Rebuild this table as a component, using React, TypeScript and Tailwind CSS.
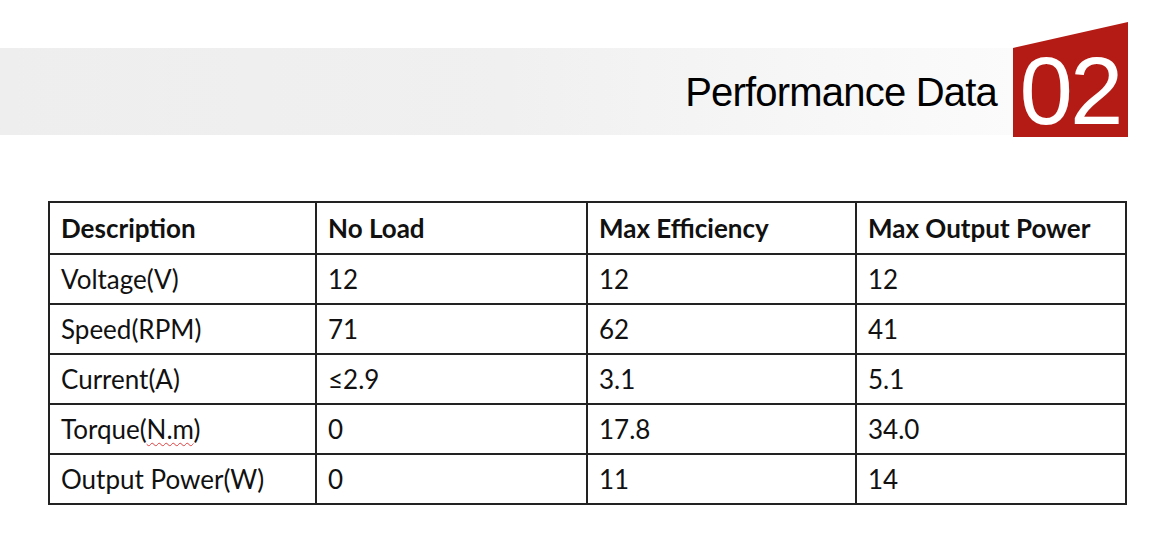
const columns = ['Description', 'No Load', 'Max Efficiency', 'Max Output Power'];

const rows: { label: React.ReactNode; values: string[] }[] = [
  { label: 'Voltage(V)', values: ['12', '12', '12'] },
  { label: 'Speed(RPM)', values: ['71', '62', '41'] },
  { label: 'Current(A)', values: ['≤2.9', '3.1', '5.1'] },
  {
    label: (
      <>
        Torque(
        <span className="underline decoration-wavy decoration-[#e04040] decoration-1 underline-offset-[3px]">N.m</span>)
      </>
    ),
    values: ['0', '17.8', '34.0'],
  },
  { label: 'Output Power(W)', values: ['0', '11', '14'] },
];

const colWidths = ['w-[267px]', 'w-[271px]', 'w-[269px]', 'w-[270px]'];

export default function App() {
  return (
    <div className="w-[1170px] h-[539px] bg-white overflow-hidden">
      {/* Section header */}
      <div className="flex items-end pt-[22px]">
        <div className="flex-1 h-[87px] mb-[2px] flex items-center justify-end pr-[16px] bg-gradient-to-r from-[#eeeeee] via-[#f0f0f0] to-[#fbfbfb]">
          <h1 className="font-['Liberation_Sans',Arial,sans-serif] text-[40px] leading-none tracking-[-0.8px] text-black">
            Performance Data
          </h1>
        </div>
        <div className="w-[115px] h-[115px] bg-[#b41b14] [clip-path:polygon(0_26px,100%_0,100%_100%,0_100%)] flex items-end justify-center pr-[1px]">
          <span className="font-['Liberation_Sans',Arial,sans-serif] text-[96px] leading-none text-white tracking-[-3px] mb-[-2px]">
            02
          </span>
        </div>
        <div className="w-[42px]" />
      </div>

      {/* Data table */}
      <div className="pl-[48px] mt-[64px]">
        <table className="border-collapse font-['Lato',sans-serif] text-[26px] text-[#111]">
          <thead>
            <tr className="h-[52px]">
              {columns.map((c, i) => (
                <th key={c} className={`${colWidths[i]} border-2 border-[#222] px-[11px] text-left font-bold`}>
                  {c}
                </th>
              ))}
            </tr>
          </thead>
          <tbody>
            {rows.map((r, ri) => (
              <tr key={ri} className="h-[50px]">
                <td className="border-2 border-[#222] px-[11px]">{r.label}</td>
                {r.values.map((v, vi) => (
                  <td key={vi} className="border-2 border-[#222] px-[11px]">
                    {v}
                  </td>
                ))}
              </tr>
            ))}
          </tbody>
        </table>
      </div>
    </div>
  );
}
